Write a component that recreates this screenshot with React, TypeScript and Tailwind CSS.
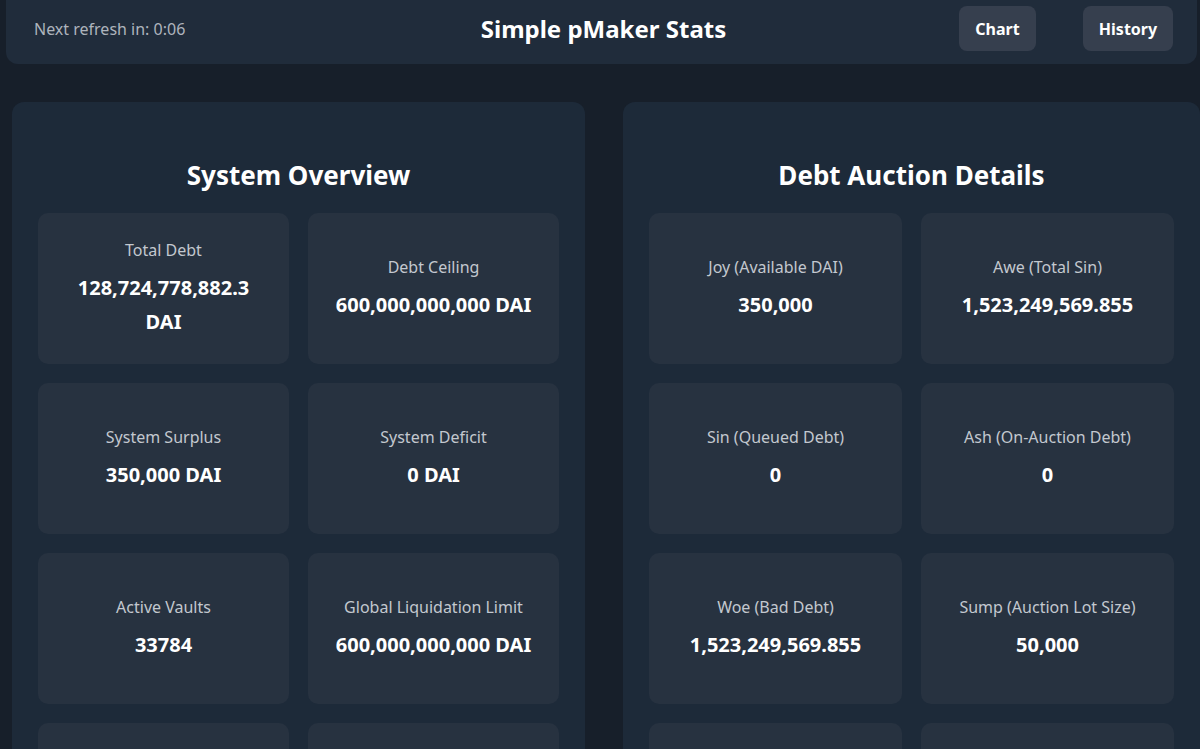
const overview = [
  { label: "Total Debt", value: "128,724,778,882.3 DAI" },
  { label: "Debt Ceiling", value: "600,000,000,000 DAI" },
  { label: "System Surplus", value: "350,000 DAI" },
  { label: "System Deficit", value: "0 DAI" },
  { label: "Active Vaults", value: "33784" },
  { label: "Global Liquidation Limit", value: "600,000,000,000 DAI" },
  { label: "Stability Fee", value: "2.00%" },
  { label: "DSR", value: "1.50%" },
];

const auction = [
  { label: "Joy (Available DAI)", value: "350,000" },
  { label: "Awe (Total Sin)", value: "1,523,249,569.855" },
  { label: "Sin (Queued Debt)", value: "0" },
  { label: "Ash (On-Auction Debt)", value: "0" },
  { label: "Woe (Bad Debt)", value: "1,523,249,569.855" },
  { label: "Sump (Auction Lot Size)", value: "50,000" },
  { label: "Dump (Initial MKR Lot)", value: "250" },
  { label: "Bump (Surplus Lot Size)", value: "10,000" },
];

type Stat = { label: string; value: string };

const StatCard = ({ label, value }: Stat) => (
  <div className="h-[151px] rounded-[10px] bg-[#273240] px-5 flex flex-col items-center justify-center text-center">
    <div className="text-base leading-6 text-[#c3c8cf] mb-[9px]">{label}</div>
    <div className="text-xl leading-[34px] font-bold text-white">{value}</div>
  </div>
);

const Panel = ({ title, stats }: { title: string; stats: Stat[] }) => (
  <section className="rounded-xl bg-[#1d2a39] px-[26px] pt-[57px] pb-[26px]">
    <h2 className="text-[26px] leading-8 font-bold text-white text-center mb-[22px]">{title}</h2>
    <div className="grid grid-cols-2 gap-[19px]">
      {stats.map((s) => (
        <StatCard key={s.label} label={s.label} value={s.value} />
      ))}
    </div>
  </section>
);

export default function App() {
  return (
    <div
      className="min-h-screen bg-[#171f2a] text-white"
      style={{ fontFamily: '"Noto Sans", "Open Sans", sans-serif' }}
    >
      <header className="ml-[6px] mr-[3px] h-[64px] rounded-b-xl bg-[#202c3b] pl-[28px] pr-[24px] pt-[6px] grid grid-cols-[1fr_auto_1fr] items-start">
        <div className="h-[45px] flex items-center text-base text-[#aeb4bd]">Next refresh in: 0:06</div>
        <h1 className="h-[45px] flex items-center text-2xl font-bold">Simple pMaker Stats</h1>
        <div className="flex justify-end gap-[47px]">
          <button className="h-[45px] w-[77px] rounded-lg bg-[#363f4e] text-base font-bold text-white">Chart</button>
          <button className="h-[45px] w-[90px] rounded-lg bg-[#363f4e] text-base font-bold text-white">History</button>
        </div>
      </header>

      <main className="grid grid-cols-[573px_1fr] gap-[38px] pl-3 mt-[38px]">
        <Panel title="System Overview" stats={overview} />
        <Panel title="Debt Auction Details" stats={auction} />
      </main>
    </div>
  );
}
